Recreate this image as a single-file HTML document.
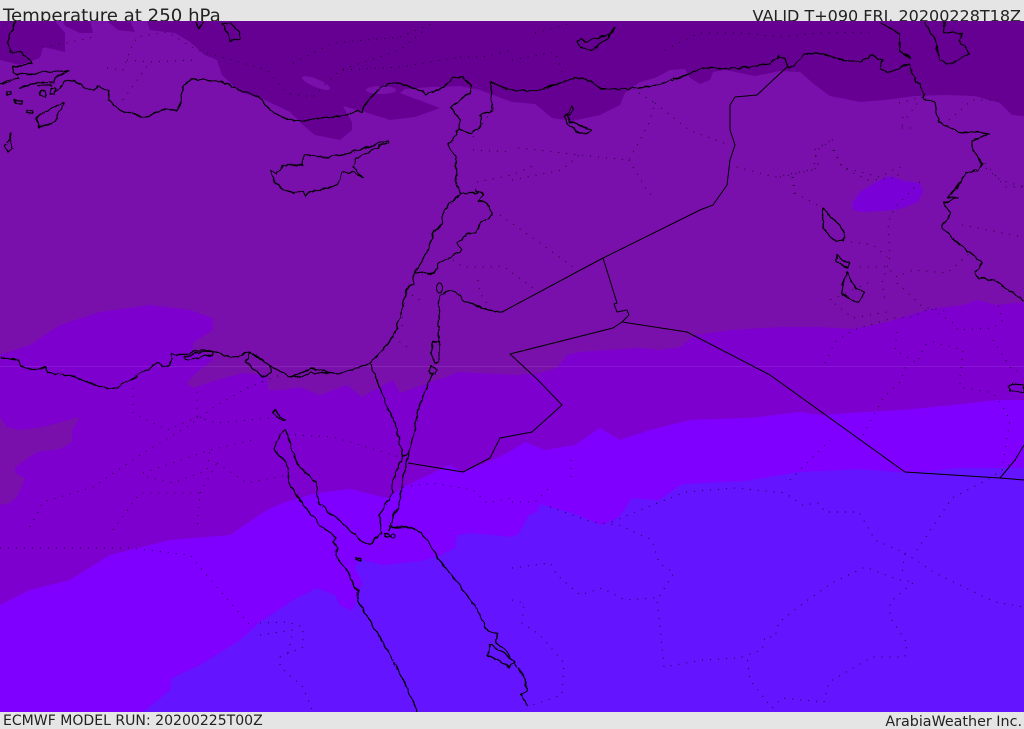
<!DOCTYPE html>
<html><head><meta charset="utf-8"><style>
html,body{margin:0;padding:0;background:#e5e5e5;width:1024px;height:729px;overflow:hidden}
svg{display:block}
text{font-family:"DejaVu Sans","Liberation Sans",sans-serif;fill:#222}
.c{fill:none;stroke:#000;stroke-width:1;stroke-linejoin:round}
.w{stroke-width:1.25}
.d{fill:none;stroke:#000;stroke-width:1;stroke-dasharray:1 7;opacity:.75}
</style></head><body>
<svg width="1024" height="729" viewBox="0 0 1024 729" xmlns="http://www.w3.org/2000/svg">
<defs><filter id="w" filterUnits="userSpaceOnUse" x="-10" y="10" width="1044" height="720"><feTurbulence type="turbulence" baseFrequency="0.1" numOctaves="1" seed="4"/><feDisplacementMap in="SourceGraphic" scale="4" xChannelSelector="R" yChannelSelector="G"/></filter></defs>
<rect width="1024" height="729" fill="#e5e5e5"/>
<text x="3" y="21.500" font-size="18.15">Temperature at 250 hPa</text>
<text x="1021" y="21.500" font-size="16" text-anchor="end">VALID T+090 FRI. 20200228T18Z</text>
<text x="3" y="725" font-size="14.05">ECMWF MODEL RUN: 20200225T00Z</text>
<text x="1022" y="726" font-size="14.3" text-anchor="end">ArabiaWeather Inc.</text>
<svg x="0" y="21" width="1024" height="691" viewBox="0 21 1024 691">
<rect y="21" width="1024" height="691" fill="#7a10ac"/>
<!-- dark top -->
<path fill="#660092" d="M0 21V60L20 65 40 58 43 47 65 52 65 33 55 21H63L65 26 80 33 93 33 90 21H107L118 30 135 32 130 21H147L150 30 175 33 190 42 205 55 217 60 222 75 240 92 265 100 290 112 303 125 315 135 340 140 352 130 352 122 345 110 343 106 365 112 390 120 415 117 440 108 400 93 405 89 430 87 460 86 480 90 512 102 535 104 552 118 572 121 600 115 620 105 625 93 640 82 655 78 670 70 685 69 690 78 700 84 710 80 713 72 725 70 755 76 780 71 800 72 815 85 830 96 860 102 885 100 915 96 945 95 975 96 1000 103 1012 115 1024 116V21Z"/>
<ellipse cx="316" cy="83" rx="15" ry="4" transform="rotate(22 316 83)" fill="#7a10ac"/>
<ellipse cx="381" cy="90" rx="15" ry="4" fill="#7a10ac"/>
<!-- next band -->
<path fill="#7d00cf" d="M0 355 30 345 60 325 100 312 150 305 190 310 213 318 213 330 193 343 193 352 213 355 213 360 197 372 187 383 193 388 217 380 243 373 267 375 268 390 283 390 300 387 320 395 347 385 362 397 393 380 400 393 417 387 437 380 447 377 457 372 517 375 540 373 557 368 567 355 580 352 607 350 640 348 660 350 680 347 695 335 730 330 780 327 820 327 853 329 887 322 930 309 963 305 977 300 997 305 1024 302V712H0Z"/>
<path fill="#7a10ac" d="M0 417 7 427 20 430 43 427 80 417 72 430 72 442 60 449 37 452 15 467 15 473 25 478 17 497 10 503 0 505Z"/>
<path fill="#7a00d8" d="M852 203 860 192 878 181 890 176 905 181 920 183 923 192 918 202 900 209 885 211 862 212 853 210Z"/>
<path fill="#8000ff" d="M0 605 30 590 70 580 110 555 170 540 230 535 267 510 283 503 317 493 350 489 387 498 403 487 450 465 463 472 493 460 507 453 525 442 545 450 575 445 600 428 620 440 650 430 690 420 750 418 800 412 820 415 850 413 903 410 953 405 997 400 1024 400V712H0Z"/>
<path fill="#6414ff" d="M143 712 170 690 172 678 200 665 240 640 260 622 293 600 317 588 335 595 340 605 352 611 357 600 362 582 355 568 360 559 383 565 420 561 437 557 455 548 457 535 473 533 513 537 519 533 529 515 537 512 540 504 572 513 602 525 619 517 632 498 659 500 682 484 745 481 799 472 859 469 912 473 959 468 1024 468V712Z"/>
<rect y="366" width="1024" height="1" fill="#fff" opacity=".09"/>
<!-- dotted borders -->
<g class="d">
<path d="M512 502 535 502 549 488M550 507 592 522 619 525 652 540 659 563 674 573 657 600 659 617 664 667 702 660 739 658 762 650 765 637 775 637 779 622 805 602 832 583 865 567 899 580 914 582 890 602 890 617 907 643 905 657 872 657 829 682 824 702 782 698 772 708 750 680 747 657"/>
<path d="M612 522 635 512 685 492 735 488 785 493 802 505 819 503 825 512 859 512 875 540 905 553 902 573M905 553 935 573 995 602 1024 607M917 550 952 498 989 479 1016 460"/>
<path d="M512 568 550 563 557 575 580 595 602 588 625 600 655 598M512 600 524 603 522 623 540 635 564 663 562 695 532 705"/>
<path d="M30 527 43 502 93 487 143 453 187 427 217 405 247 388 280 375M133 388 133 413 167 430 197 417 197 388M197 417 217 423 280 417M143 473 210 450 253 440M147 477 173 483 207 470 210 450M217 463 247 483 287 475M295 435 333 437 400 457M113 530 140 493 200 493 197 530M200 493 217 463M0 548 80 548 130 548 190 555 215 585 250 625"/>
<path d="M403 487 433 483 473 490 487 503 512 498M571 460 571 480"/>
<path d="M512 60 555 52 562 72M535 33 572 23M665 50 699 33 745 33 779 37 819 33 875 32M639 93 655 103 649 123 629 160 579 155 512 147M655 103 689 130 729 145M629 160 645 187 655 200M729 165 775 177 819 168 814 150 835 138M834 150 842 167 879 177 899 167M792 177 795 200M512 180 562 170 579 155M899 103 922 97 905 120M949 120 972 100 1005 100M985 163 1005 187 1024 187"/>
<path d="M43 47 67 43 93 37M107 68 123 70 130 50 137 37 167 32 197 50 267 70 287 93 313 97 340 70 400 50 427 28M127 60 150 62 197 60M123 100 150 62M293 63 333 43 400 37 433 23M460 57 483 57 512 50M343 70 400 67 460 57"/>
<path d="M473 137 490 113M473 150 512 152M477 182 512 175 535 165M492 215 500 215 540 243 573 267M453 260 463 267 487 267 503 266 533 288M478 280 480 293 488 305M412 295 420 300M402 317 402 327M393 337 407 347"/>
<path d="M780 177 813 170 817 150 835 138M793 177 795 193 823 208M833 150 843 168 868 180 897 178 900 167M920 182 895 207 888 223 890 257 882 283 885 300M843 241 873 245 887 257M860 267 887 267 897 277 913 270 947 273 970 253M897 283 923 307 950 312M868 283 830 300 853 318 887 312M962 225 1013 235 1024 237M980 163 1000 180 1024 187M902 128 918 128M903 117 902 128"/>
<path d="M260 623 288 622 303 627 303 647 280 657 280 667 303 687 312 710M260 635 293 630 288 653"/>
<path d="M825 363 835 342 853 330 893 318 913 317 930 308 953 323 958 330 993 328 1003 320 997 302M897 332 895 350 917 363 925 345 933 342 963 350 960 377 960 387 993 393 1003 407 1010 420 1003 463M863 435 883 398 900 382 907 363M993 340 1012 370 1024 372M790 480 830 440"/>
</g>
<!-- wiggly coasts -->
<g class="c w" filter="url(#w)" transform="translate(-1 -1)">
<!-- Turkey coast / Turkey-Syria -->
<path d="M10 21 15 22 12 30 8 38 10 52 20 52 30 60 32 63 13 67 12 72 17 75 68 70 55 77 55 82 38 82 18 88M37 85 53 85M55 92 65 80 75 80 83 87 93 90 98 85 108 90 108 100 120 110 133 115 145 117 165 108 176 110 180 103 183 85 190 79 220 81 240 90 258 96 270 110 285 118 300 121 315 118 345 115 357 110 362 112 367 100 380 87 395 82 415 88 427 94 440 88 446 85 452 78 462 76 471 85 470 92 450 107 460 120 458 128 470 133 482 125 480 115 492 110 490 82 512 90 535 91 555 84 575 77 592 81 600 88 625 89 655 85 679 77 702 67 725 68 742 68 769 63 779 56 785 59 787 67 795 65 805 53 822 53 845 60 859 62 870 56 882 60 880 68 887 73 909 63 910 68 915 80 922 88 924 98 934 103 939 122 959 132 977 131 990 133 972 140 972 150 982 163 977 170 965 173 955 190 947 197 957 197 943 203 950 213 942 227 960 245 982 263 975 272 978 278 993 280 1024 300"/>
<path d="M880 22 899 33 899 50 910 58"/>
<path d="M924 21 935 40 939 60 947 65 969 53 959 40 962 33 944 32 944 21"/>
<path d="M195 21 198 28 203 21M222 23 230 23 240 33 240 38 230 41 227 33 222 23Z"/>
<path d="M63 102 43 112 36 117 38 127 43 127 55 120 63 103ZM0 83 18 77 8 83ZM6 92 11 92 11 95 6 95ZM15 100 22 100 22 103 15 103ZM27 110 32 110 32 113 27 113ZM40 90 45 90 45 97 40 95ZM50 88 55 88 55 95 50 95ZM11 133 7 143 4 145 7 152 12 148 10 142Z"/>
<!-- Levant -->
<path d="M458 128 453 140 447 145 455 155 456 175 455 180 460 193 450 203 443 210 442 223 434 231 428 248 420 263 414 272 413 285 407 287 403 303 397 327 383 350 368 363 340 373 330 372 310 368 290 377 270 365 250 352 233 357 213 352 203 349 182 355 172 354 170 365 163 366 157 363 143 372 117 387 105 388 70 375 47 373 45 367 33 369 20 366 17 359 0 357"/>
<path d="M183 357 203 351 213 352 211 355 195 358 187 360ZM245 363 250 352 270 365 271 373 262 376 253 368ZM290 377 310 368 330 372 318 374 310 372 303 376Z"/>
<path d="M460 193 477 193 475 190 483 194 478 200 487 203 492 215 480 223 475 232 467 233 457 243 462 250 438 263 435 272 427 274 414 272"/>
<path d="M439 295 450 290 460 295 465 302 487 309 502 312"/>
<path d="M439 295 438 340M433 341 439 341 438 362 435 363 430 353ZM428 370 431 366 437 370 435 374 430 373Z"/>
<path d="M432 373 417 410 415 427 408 453"/>
<path d="M370 363 385 403 397 430 403 456"/>
<!-- Suez, Sinai -->
<path d="M285 430 292 450 298 465 316 482 318 503 337 518 360 540 370 544 381 532 379 515 392 493 395 472 403 456 408 453 403 478 398 507 390 525 388 530 392 525 393 527 412 527 420 532 430 543 437 558 450 573 463 590 477 610 487 630 497 633 495 642 503 648 512 660 523 675 527 690 520 695 528 705"/>
<path d="M285 430 280 433 273 450 287 463 288 483 302 503 320 525 335 537 332 542 337 547 335 555 348 572 350 580 358 590 357 600 377 633 393 660 408 690 417 712"/>
<path d="M272 412 275 409 279 416 285 420 283 421 272 413ZM355 557 360 558 360 560 355 559ZM384 533 388 533 390 536 385 536ZM490 643 487 655 500 660 508 667 515 663 508 657 495 648 490 643Z"/>
<!-- Cyprus -->
<path d="M388 140 367 147 347 153 327 157 304 154 303 165 283 165 277 173 270 170 273 180 282 189 293 193 302 191 305 197 310 191 323 189 338 183 342 173 353 172 363 177 353 167 355 158 388 142Z"/>
<!-- Lakes -->
<path d="M576 41 581 38 585 42 597 38 612 32 614 27 607 38 592 50 580 47Z"/>
<path d="M572 106 574 110 567 115 570 122 584 127 592 130 587 133 580 133 569 125 564 117Z"/>
<path d="M823 208 822 215 823 228 833 240 843 241 845 232 837 223 828 215ZM835 259 838 255 842 260 849 262 847 267 835 262ZM847 272 842 285 843 295 858 302 865 293 855 287 848 275Z"/>
<path d="M1008 386 1015 383 1024 385 1024 392 1010 391Z"/>
</g>
<!-- straight borders -->
<g class="c">
<ellipse cx="439.500" cy="288" rx="3" ry="5"/>
<ellipse cx="393" cy="536" rx="2" ry="2"/>
<path d="M502 312 603 258 700 210 713 205 727 185 730 160 735 145 730 130 730 105 735 97 757 95 787 67"/>
<path d="M603 258 617 303 614 304 617 312 627 310 629 315 622 322 613 328 510 354 538 380 562 405 532 432 500 438 490 458 463 472 408 463"/>
<path d="M622 322 687 332 770 375 905 472 1000 478 1024 480M1000 478 1015 460 1024 445"/>
</g>
</svg>
</svg>
</body></html>
